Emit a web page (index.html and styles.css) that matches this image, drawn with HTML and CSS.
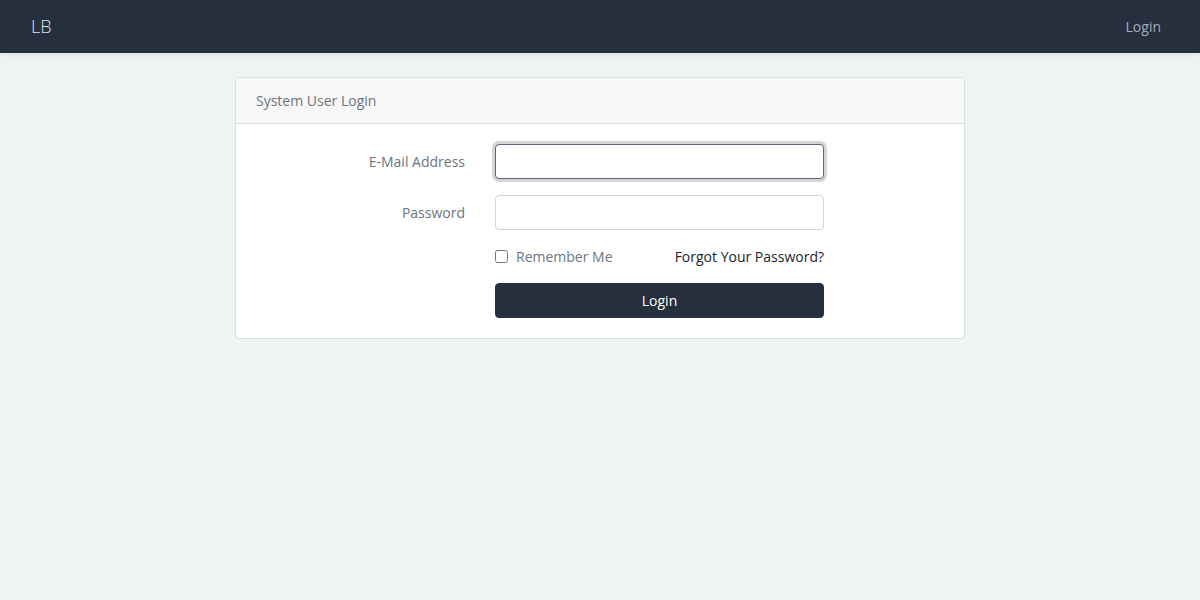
FILE: index.html
```html
<!DOCTYPE html>
<html lang="en">
<head>
<meta charset="utf-8">
<title>Login</title>
<link rel="stylesheet" href="styles.css">
</head>
<body>
<nav class="navbar">
  <a class="brand" href="#">LB</a>
  <a class="nav-link" href="#">Login</a>
</nav>
<main class="main">
  <div class="card">
    <div class="card-header">System User Login</div>
    <form class="card-body">
      <div class="form-row">
        <label class="label" for="email">E-Mail Address</label>
        <div class="field"><input id="email" class="input focused" type="email"></div>
      </div>
      <div class="form-row">
        <label class="label" for="password">Password</label>
        <div class="field"><input id="password" class="input" type="password"></div>
      </div>
      <div class="form-row">
        <div class="label"></div>
        <div class="field split">
          <label class="check"><input type="checkbox" class="checkbox"> Remember Me</label>
          <a class="forgot" href="#">Forgot Your Password?</a>
        </div>
      </div>
      <div class="form-row last">
        <div class="label"></div>
        <div class="field"><button type="button" class="btn">Login</button></div>
      </div>
    </form>
  </div>
</main>
</body>
</html>
```

FILE: styles.css
```css
* { box-sizing: border-box; }
html, body { margin: 0; }
body {
  background: #f0f3f4;
  font-family: "Open Sans", "Liberation Sans", sans-serif;
  font-size: 14px;
  line-height: 1.5;
  color: #212529;
}
.navbar {
  height: 53px;
  background: #262f3d;
  display: flex;
  align-items: center;
  justify-content: space-between;
  padding: 0 31px 0 31px;
  box-shadow: 0 2px 4px rgba(0,0,0,0.08);
}
.brand {
  color: #dfe5ee;
  font-size: 18px;
  font-weight: 300;
  text-decoration: none;
  line-height: 27px;
  margin-top: -1px;
}
.nav-link {
  color: #a3acb8;
  font-size: 14px;
  text-decoration: none;
  margin-right: 8px;
}
.main {
  padding-top: 24px;
  display: flex;
  justify-content: center;
}
.card {
  width: 730px;
  background: #fff;
  border: 1px solid #dcdee0;
  border-radius: 4px;
}
.card-header {
  background: #f7f7f7;
  border-bottom: 1px solid #dcdee0;
  padding: 12px 20px;
  color: #6c757d;
  border-radius: 4px 4px 0 0;
}
.card-body {
  padding: 20px;
  margin: 0;
}
.form-row {
  display: flex;
  align-items: center;
  margin-bottom: 16px;
}
.form-row.last { margin-bottom: 0; }
.label {
  width: 209px;
  text-align: right;
  color: #6c757d;
  flex: none;
}
.field {
  width: 329px;
  margin-left: 30px;
  flex: none;
}
.input {
  display: block;
  width: 100%;
  height: 35px;
  border: 1px solid #ced4da;
  border-radius: 4px;
  background: #fff;
  font: inherit;
  padding: 6px 12px;
  outline: none;
}
.input.focused {
  border-color: #5b6676;
  box-shadow: 0 0 0 3px rgba(38,47,61,0.2);
}
.split {
  display: flex;
  justify-content: space-between;
  align-items: center;
}
.check {
  color: #6c757d;
  display: flex;
  align-items: center;
}
.checkbox {
  width: 13px;
  height: 13px;
  margin: 0 8px 0 0;
}
.forgot {
  color: #212529;
  text-decoration: none;
}
.btn {
  display: block;
  width: 100%;
  height: 35px;
  background: #262f3d;
  color: #fff;
  border: 1px solid #262f3d;
  border-radius: 4px;
  font: inherit;
  padding: 6px 12px;
}
```
